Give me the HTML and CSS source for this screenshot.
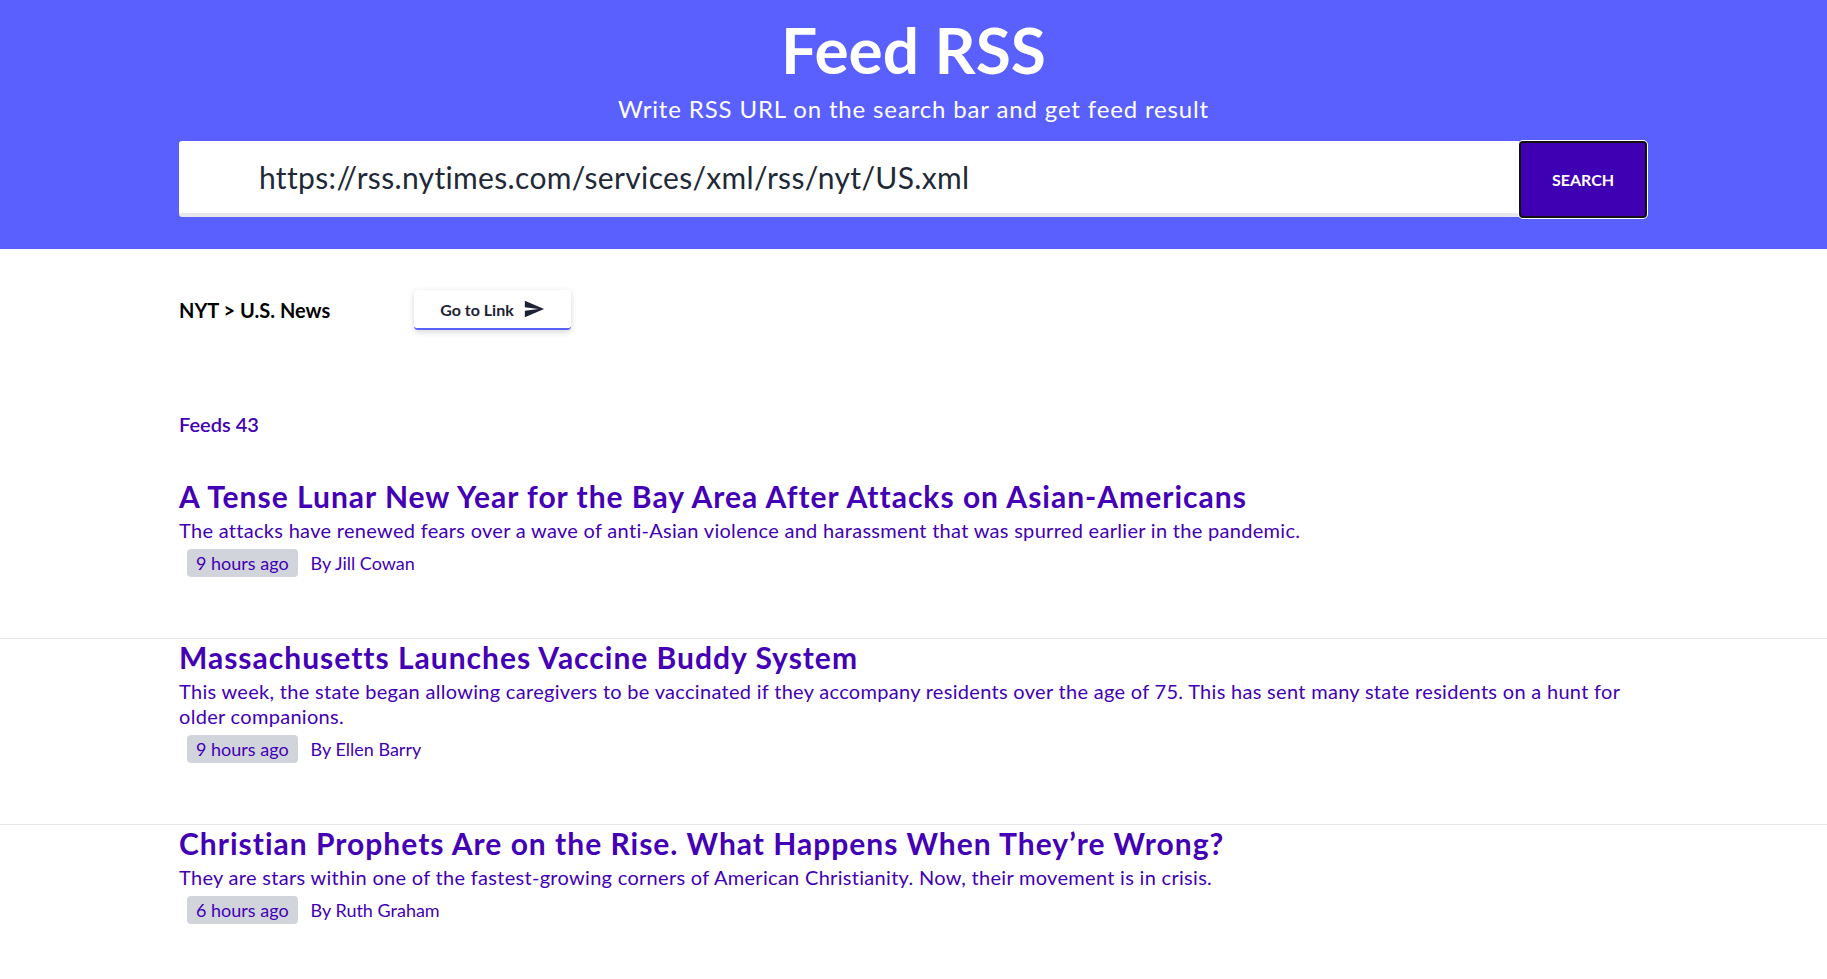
FILE: index.html
```html
<!DOCTYPE html>
<html lang="en">
<head>
<meta charset="utf-8">
<title>Feed RSS</title>
<link rel="stylesheet" href="styles.css">
</head>
<body>
<header class="hero">
  <h1 class="hero-title">Feed RSS</h1>
  <p class="hero-subtitle">Write RSS URL on the search bar and get feed result</p>
  <form class="search">
    <input class="search-input" type="text" value="https://rss.nytimes.com/services/xml/rss/nyt/US.xml">
    <button class="search-button" type="button">Search</button>
  </form>
</header>
<main class="content">
  <div class="source">
    <h2 class="source-name">NYT &gt; U.S. News</h2>
    <a class="go-link" href="#">Go to Link
      <svg class="go-icon" viewBox="0 0 24 24" width="22" height="22"><path d="M2.01 21L23 12 2.01 3 2 10l15 2-15 2z" fill="currentColor"/></svg>
    </a>
  </div>
  <p class="feeds-count">Feeds 43</p>
</main>
<ul class="feed-list">
  <li class="feed-item">
    <div class="feed-inner">
      <h3 class="feed-title">A Tense Lunar New Year for the Bay Area After Attacks on Asian-Americans</h3>
      <p class="feed-desc">The attacks have renewed fears over a wave of anti-Asian violence and harassment that was spurred earlier in the pandemic.</p>
      <div class="feed-meta"><span class="badge">9 hours ago</span><span class="author">By Jill Cowan</span></div>
    </div>
  </li>
  <li class="feed-item">
    <div class="feed-inner">
      <h3 class="feed-title">Massachusetts Launches Vaccine Buddy System</h3>
      <p class="feed-desc">This week, the state began allowing caregivers to be vaccinated if they accompany residents over the age of 75. This has sent many state residents on a hunt for older companions.</p>
      <div class="feed-meta"><span class="badge">9 hours ago</span><span class="author">By Ellen Barry</span></div>
    </div>
  </li>
  <li class="feed-item">
    <div class="feed-inner">
      <h3 class="feed-title">Christian Prophets Are on the Rise. What Happens When They’re Wrong?</h3>
      <p class="feed-desc">They are stars within one of the fastest-growing corners of American Christianity. Now, their movement is in crisis.</p>
      <div class="feed-meta"><span class="badge">6 hours ago</span><span class="author">By Ruth Graham</span></div>
    </div>
  </li>
</ul>
</body>
</html>
```
FILE: styles.css
```css
* { box-sizing: border-box; }
html, body { margin: 0; padding: 0; }
body {
  font-family: "Lato", "Noto Sans", sans-serif;
  color: #111;
  background: #fff;
  overflow-x: hidden;
}
.hero {
  background: #5a60fe;
  padding: 12px 0 32px;
  text-align: center;
}
.hero-title {
  margin: 0;
  font-size: 64px;
  line-height: 76px;
  font-weight: 700;
  color: #fff;
}
.hero-subtitle {
  margin: 5px 0 0;
  font-size: 24px;
  line-height: 32px;
  color: #fff;
  font-weight: 400;
  letter-spacing: 0.85px;
}
.search {
  width: 1469px;
  margin: 16px auto 0;
  display: flex;
  align-items: center;
  height: 76px;
}
.search-input {
  flex: 1;
  height: 76px;
  border: none;
  border-bottom: 4px solid #e5e7eb;
  border-radius: 3px 0 0 3px;
  padding: 0 0 0 80px;
  font-family: inherit;
  font-size: 30px;
  letter-spacing: 0.34px;
  color: #1f2937;
  background: #fff;
  outline: none;
}
.search-button {
  width: 128px;
  height: 77px;
  margin-right: 1px;
  background: #3f00b3;
  border: 2px solid #111;
  border-radius: 4px;
  box-shadow: 0 0 0 1px #fff;
  color: #fff;
  font-family: inherit;
  font-weight: 700;
  font-size: 16px;
  text-transform: uppercase;
}
.content {
  width: 1469px;
  margin: 0 auto;
}
.source {
  display: flex;
  align-items: center;
  margin-top: 41px;
  height: 40px;
}
.source-name {
  width: 235px;
  margin: 0;
  font-size: 20px;
  font-weight: 700;
  color: #000;
}
.go-link {
  display: flex;
  align-items: center;
  justify-content: center;
  gap: 9px;
  width: 157px;
  height: 40px;
  background: #fff;
  border-radius: 4px;
  border-bottom: 2px solid #5a60fe;
  box-shadow: 0 2px 6px rgba(0, 0, 0, 0.16);
  color: #1e2235;
  font-size: 16px;
  font-weight: 700;
  text-decoration: none;
}
.go-icon { display: block; }
.feeds-count {
  margin: 79px 0 0;
  font-size: 20px;
  line-height: 30px;
  font-weight: 600;
  color: #4300b5;
}
.feed-list {
  list-style: none;
  margin: 39px 0 0;
  padding: 0;
}
.feed-item {
  border-top: 1px solid #e5e7eb;
  padding-bottom: 61px;
}
.feed-item:first-child { border-top: none; }
.feed-item:last-child { padding-bottom: 0; }
.feed-inner {
  width: 1469px;
  margin: 0 auto;
  color: #4300b5;
}
.feed-title {
  margin: 0;
  font-size: 30px;
  line-height: 36px;
  font-weight: 700;
  letter-spacing: 1px;
}
.feed-desc {
  margin: 4px 0 0;
  font-size: 20px;
  line-height: 25px;
  letter-spacing: 0.3px;
  max-width: 1450px;
}
.feed-meta {
  display: flex;
  align-items: center;
  gap: 13px;
  margin-top: 6px;
  font-size: 18px;
}
.badge {
  margin-left: 8px;
  height: 28px;
  line-height: 28px;
  padding: 0 9px;
  background: #d1d5db;
  border-radius: 4px;
}
```
